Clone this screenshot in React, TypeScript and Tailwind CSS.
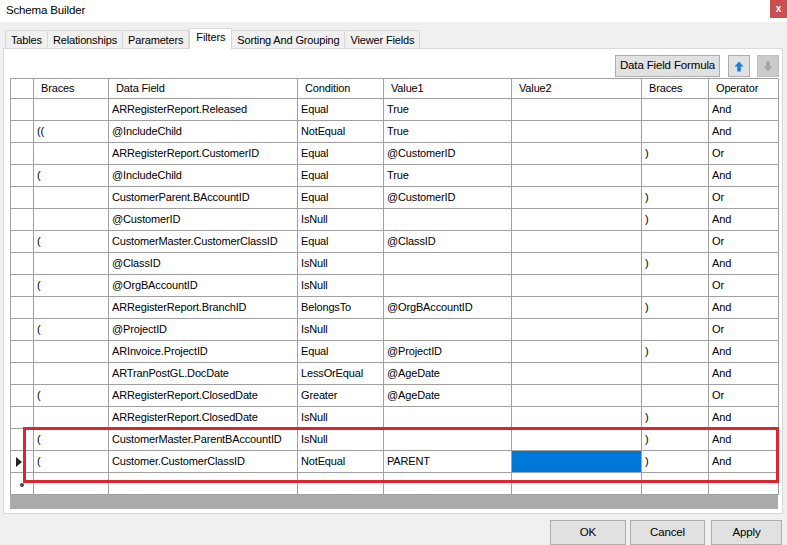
import React from 'react';

const font = { fontFamily: '"Liberation Sans", Arial, sans-serif' };

type Row = [string, string, string, string, string, string, string];

const rows: Row[] = [
  ['', 'ARRegisterReport.Released', 'Equal', 'True', '', '', 'And'],
  ['((', '@IncludeChild', 'NotEqual', 'True', '', '', 'And'],
  ['', 'ARRegisterReport.CustomerID', 'Equal', '@CustomerID', '', ')', 'Or'],
  ['(', '@IncludeChild', 'Equal', 'True', '', '', 'And'],
  ['', 'CustomerParent.BAccountID', 'Equal', '@CustomerID', '', ')', 'Or'],
  ['', '@CustomerID', 'IsNull', '', '', ')', 'And'],
  ['(', 'CustomerMaster.CustomerClassID', 'Equal', '@ClassID', '', '', 'Or'],
  ['', '@ClassID', 'IsNull', '', '', ')', 'And'],
  ['(', '@OrgBAccountID', 'IsNull', '', '', '', 'Or'],
  ['', 'ARRegisterReport.BranchID', 'BelongsTo', '@OrgBAccountID', '', ')', 'And'],
  ['(', '@ProjectID', 'IsNull', '', '', '', 'Or'],
  ['', 'ARInvoice.ProjectID', 'Equal', '@ProjectID', '', ')', 'And'],
  ['', 'ARTranPostGL.DocDate', 'LessOrEqual', '@AgeDate', '', '', 'And'],
  ['(', 'ARRegisterReport.ClosedDate', 'Greater', '@AgeDate', '', '', 'Or'],
  ['', 'ARRegisterReport.ClosedDate', 'IsNull', '', '', ')', 'And'],
  ['(', 'CustomerMaster.ParentBAccountID', 'IsNull', '', '', ')', 'And'],
  ['(', 'Customer.CustomerClassID', 'NotEqual', 'PARENT', '', ')', 'And'],
];

const headers = ['Braces', 'Data Field', 'Condition', 'Value1', 'Value2', 'Braces', 'Operator'];
const tabs = ['Tables', 'Relationships', 'Parameters', 'Filters', 'Sorting And Grouping', 'Viewer Fields'];
const cols = 'grid grid-cols-[23px_75px_189px_86px_128px_130px_67px_70px]';

function UpArrow({ color }: { color: string }) {
  return (
    <svg width="10" height="11" viewBox="0 0 10 11">
      <path d="M5 0.5 L9.5 5.5 L6.8 5.5 L6.8 10.5 L3.2 10.5 L3.2 5.5 L0.5 5.5 Z" fill={color} />
    </svg>
  );
}

function Button({ label, className }: { label: string; className: string }) {
  return (
    <div className={`flex items-center justify-center border border-[#adadad] bg-[#e1e1e1] text-black ${className}`}>
      {label}
    </div>
  );
}

export default function App() {
  return (
    <div
      className="w-[787px] h-[545px] flex flex-col bg-[#f0f0f0] overflow-hidden text-black text-[11px] tracking-[-0.15px]"
      style={font}
    >
      {/* title bar */}
      <div className="h-[22px] bg-white flex justify-between">
        <span className="pl-[6px] pt-[1px] text-[11.5px] leading-[18px]">Schema Builder</span>
        <div className="w-[17px] h-[18px] bg-[#c75050] flex items-center justify-center text-white text-[10px] font-bold leading-none">
          x
        </div>
      </div>

      {/* tabs */}
      <div className="mt-[6px] pl-[5px] flex items-end h-[20px]">
        {tabs.map((t) =>
          t === 'Filters' ? (
            <div
              key={t}
              className="h-[21px] -mb-px px-[6px] bg-white border border-b-0 border-[#d9d9d9] leading-[17px] relative z-10"
            >
              {t}
            </div>
          ) : (
            <div
              key={t}
              className="h-[18px] px-[5px] bg-[#f0f0f0] border border-l-0 first:border-l border-b-0 border-[#d9d9d9] leading-[18px]"
            >
              {t}
            </div>
          )
        )}
      </div>

      {/* tab panel */}
      <div className="ml-[3px] mr-[4px] h-[466px] bg-white border border-[#d9d9d9] flex flex-col">
        <div className="h-[29px] flex items-start justify-end gap-[7px] pt-[6px] pr-[3px]">
          <Button label="Data Field Formula" className="w-[105px] h-[22px] mr-[1px] text-[11.5px]" />
          <div className="w-[22px] h-[22px] border border-[#adadad] bg-[#e1e1e1] flex items-center justify-center">
            <UpArrow color="#1a7fe0" />
          </div>
          <div className="w-[22px] h-[22px] border border-[#bfbfbf] bg-[#cccccc] flex items-center justify-center">
            <div className="rotate-180 flex">
              <UpArrow color="#a6a6a6" />
            </div>
          </div>
        </div>

        {/* grid */}
        <div className="ml-[6px] w-[768px] relative">
          <div className="border-t border-l border-[#a0a0a0]">
            <div className={`${cols} h-[20px]`}>
              <div className="border-r border-b border-[#a0a0a0]" />
              {headers.map((h, i) => (
                <div key={i} className="border-r border-b border-[#a0a0a0] flex items-center pl-[7px]">
                  {h}
                </div>
              ))}
            </div>
            {rows.map((r, ri) => (
              <div key={ri} className={`${cols} h-[22px]`}>
                <div className="border-r border-b border-[#a0a0a0] flex items-center pl-[5px]">
                  {ri === rows.length - 1 && (
                    <svg width="6" height="10" viewBox="0 0 6 10">
                      <path d="M0 0 L6 5 L0 10 Z" fill="#222" />
                    </svg>
                  )}
                </div>
                {r.map((c, ci) => (
                  <div
                    key={ci}
                    className={`border-r border-b border-[#a0a0a0] flex items-center pl-[3px] whitespace-nowrap overflow-hidden ${
                      ri === rows.length - 1 && ci === 4 ? 'bg-[#0078d7]' : ''
                    }`}
                  >
                    {c}
                  </div>
                ))}
              </div>
            ))}
            <div className={`${cols} h-[22px]`}>
              <div className="border-r border-b border-[#a0a0a0] flex items-center pl-[9px] pt-[2px]">
                <div className="w-[4px] h-[4px] rounded-full bg-[#444]" />
              </div>
              {headers.map((_, i) => (
                <div key={i} className="border-r border-b border-[#a0a0a0]" />
              ))}
            </div>
          </div>
          <div className="h-[14px] bg-[#ababab]" />

          {/* highlight */}
          <div className="absolute left-[13px] top-[349px] w-[756px] h-[56px] border-[3px] border-[#d9262f] pointer-events-none" />
        </div>
      </div>

      {/* footer buttons */}
      <div className="flex justify-end gap-[4px] pr-[5px] mt-[6px] text-[11.5px]">
        <Button label="OK" className="w-[76px] h-[25px]" />
        <Button label="Cancel" className="w-[75px] h-[25px] mr-[2px]" />
        <Button label="Apply" className="w-[71px] h-[25px]" />
      </div>
    </div>
  );
}
